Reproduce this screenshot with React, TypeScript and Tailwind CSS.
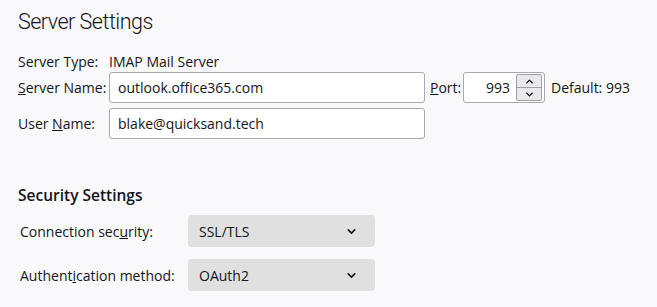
import { ChevronDown, ChevronUp } from 'lucide-react'

const Select = ({ value }: { value: string }) => (
  <div className="flex h-[32px] w-[187px] items-center justify-between rounded-[4px] bg-[#e0e0e0] pl-[11px] pr-[17px] text-[#15141a]">
    <span>{value}</span>
    <ChevronDown size={13} strokeWidth={3} />
  </div>
)

export default function App() {
  return (
    <div className="h-[307px] w-[657px] bg-[#f9f9fb] pl-[18px] pt-[6px] font-['Open_Sans','Noto_Sans',sans-serif] text-[14px] text-[#15141a]">
      <h1 className="font-['Roboto',sans-serif] text-[21.5px] font-light leading-[32px] tracking-[-0.5px]">
        Server Settings
      </h1>

      <div className="mt-[13px] flex h-[20px] items-center">
        <span className="w-[91px]">Server Type:</span>
        <span>IMAP Mail Server</span>
      </div>

      <div className="mt-[1px] flex h-[31px] items-center">
        <span className="w-[91px]">
          <u>S</u>erver Name:
        </span>
        <div className="flex h-[31px] w-[316px] items-center rounded-[3px] border border-[#a8a8b0] bg-white px-[8px]">
          outlook.office365.com
        </div>
        <span className="ml-[5px] w-[33px]">
          <u>P</u>ort:
        </span>
        <div className="flex h-[31px] w-[82px] items-center rounded-[3px] border border-[#a8a8b0] bg-white pr-[2px]">
          <span className="flex-1 pr-[6px] text-right">993</span>
          <div className="flex h-[27px] w-[26px] flex-col overflow-hidden rounded-[2px] border border-[#a0a0a0] bg-[#e9e9ed]">
            <div className="flex flex-1 items-center justify-center border-b border-[#a0a0a0]">
              <ChevronUp size={11} strokeWidth={3} />
            </div>
            <div className="flex flex-1 items-center justify-center">
              <ChevronDown size={11} strokeWidth={3} />
            </div>
          </div>
        </div>
        <span className="ml-[6px]">Default: 993</span>
      </div>

      <div className="mt-[5px] flex h-[31px] items-center">
        <span className="w-[91px]">
          User <u>N</u>ame:
        </span>
        <div className="flex h-[31px] w-[316px] items-center rounded-[3px] border border-[#a8a8b0] bg-white px-[8px]">
          blake@quicksand.tech
        </div>
      </div>

      <h2 className="mt-[44px] text-[15.5px] font-semibold leading-[24px]">Security Settings</h2>

      <div className="mt-[8px] flex flex-col gap-[12px] pl-[2px]">
        <div className="flex items-center">
          <span className="w-[168px]">
            Connection sec<u>u</u>rity:
          </span>
          <Select value="SSL/TLS" />
        </div>
        <div className="flex items-center">
          <span className="w-[168px]">
            Authent<u>i</u>cation method:
          </span>
          <Select value="OAuth2" />
        </div>
      </div>
    </div>
  )
}
